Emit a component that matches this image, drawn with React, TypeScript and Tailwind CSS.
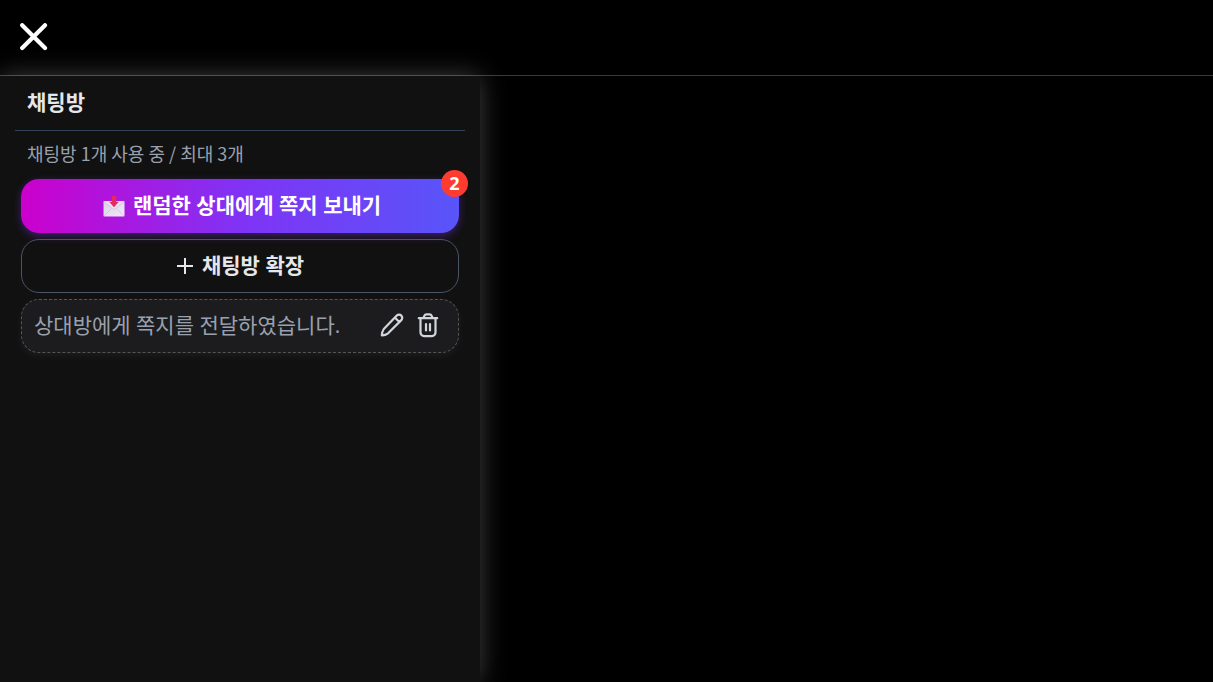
import React from 'react'

function CloseIcon() {
  return (
    <svg viewBox="0 0 28 28" className="size-7" fill="none" stroke="currentColor" strokeWidth="4.2" strokeLinecap="round" aria-hidden="true">
      <path d="M2.2 2.2 25 25M25 2.2 2.2 25" />
    </svg>
  )
}

function OutboxIcon() {
  return (
    <svg viewBox="0 0 22 22" className="h-[22px] w-[22px] shrink-0" aria-hidden="true">
      <defs>
        <linearGradient id="envelope" x1="0" y1="0" x2="1" y2="1">
          <stop offset="0" stopColor="#d9d0e6" />
          <stop offset="1" stopColor="#f1e9fa" />
        </linearGradient>
      </defs>
      <rect x="0.5" y="6" width="21" height="15.5" rx="0.8" fill="url(#envelope)" />
      <path d="m1 21 7.5-7.5M21 21l-7.5-7.5" stroke="#c4b8d3" strokeWidth="0.6" />
      <path d="m.8 6.5 8.7 7.2q1.5 1 3 0l8.7-7.2" fill="#e9e1f1" stroke="#c4b8d3" strokeWidth="0.6" />
      <path d="M8.8 1h4.4v5.8h2.7L11 12.2 6.1 6.8h2.7z" fill="#e52a60" />
    </svg>
  )
}

function PlusIcon() {
  return (
    <svg viewBox="0 0 18 18" className="h-[18px] w-[18px]" stroke="currentColor" strokeWidth="2" aria-hidden="true">
      <path d="M1 9h16M9 1v16" />
    </svg>
  )
}

function PencilIcon() {
  return (
    <svg viewBox="0 0 24 24" className="size-6" fill="none" stroke="currentColor" strokeWidth="2.2" strokeLinecap="round" strokeLinejoin="round" aria-hidden="true">
      <path d="M16.8 2.6a3.15 3.15 0 0 1 4.5 4.5L8.1 20.3Q5 22.5 1.8 22.3 1.8 19 3.8 16zM15.1 4.8l4.2 4.2" />
    </svg>
  )
}

function TrashIcon() {
  return (
    <svg viewBox="0 0 24 26" className="h-[26px] w-6" fill="none" stroke="currentColor" strokeWidth="2.2" strokeLinecap="round" strokeLinejoin="round" aria-hidden="true">
      <path d="M2.8 6.2h18.4M7.5 6l.8-2.2a2.4 2.4 0 0 1 2.2-1.5h3a2.4 2.4 0 0 1 2.2 1.5l.8 2.2M4.5 6.4v14.2a3.5 3.5 0 0 0 3.5 3.5h8a3.5 3.5 0 0 0 3.5-3.5V6.4M10 12v6.5M14 12v6.5" />
    </svg>
  )
}

function App() {
  return (
    <div className="flex min-h-screen flex-col bg-black font-['Open_Sans','Noto_Sans_CJK_KR',sans-serif] text-gray-200">
      <header className="flex h-[76px] items-center border-b border-[#3a3a3a] px-5 text-white">
        <button type="button" aria-label="닫기" className="-mt-0.5">
          <CloseIcon />
        </button>
      </header>

      <main className="flex flex-1">
        <aside className="w-120 max-w-full bg-[#111111] px-[15px] shadow-[0_0_24px_rgba(255,255,255,0.25)]">
          <h1 className="flex h-[55px] items-center border-b border-slate-700 px-3 text-[21px] font-bold">채팅방</h1>
          <p className="flex h-12 items-center px-3 pb-1 font-['Noto_Sans_CJK_KR',sans-serif] text-lg text-gray-400">
            채팅방 1개 사용 중 / 최대 3개
          </p>

          <div className="flex flex-col gap-1.5 px-1.5 text-[21px]">
            <button
              type="button"
              className="relative flex h-[54px] items-center justify-center gap-2 rounded-[18px] bg-linear-to-r/srgb from-[#cc00cc] via-[#8033f5] to-[#5855f9] pl-1 font-bold text-white shadow-[0_3px_9px_rgba(128,51,245,0.4)]"
            >
              <OutboxIcon />
              <span>랜덤한 상대에게 쪽지 보내기</span>
              <span className="absolute -top-[9px] -right-[9px] flex size-[27px] items-center justify-center rounded-full bg-[#ff3b30] pb-0.5 text-lg font-bold">
                2
              </span>
            </button>

            <button type="button" className="flex h-[54px] items-center justify-center gap-2 rounded-[18px] border border-gray-600 font-bold">
              <PlusIcon />
              <span>채팅방 확장</span>
            </button>

            <div className="flex h-[54px] items-center rounded-[18px] border border-dashed border-[#555555] bg-[#1c1c1e] px-3 shadow-[0_3px_9px_rgba(255,255,255,0.05)]">
              <p className="min-w-0 flex-1 truncate text-gray-400">상대방에게 쪽지를 전달하였습니다.</p>
              <div className="flex items-center gap-3 px-1.5 pb-0.5 text-gray-300">
                <button type="button" aria-label="이름 수정">
                  <PencilIcon />
                </button>
                <button type="button" aria-label="삭제">
                  <TrashIcon />
                </button>
              </div>
            </div>
          </div>
        </aside>
      </main>
    </div>
  )
}

export default App
